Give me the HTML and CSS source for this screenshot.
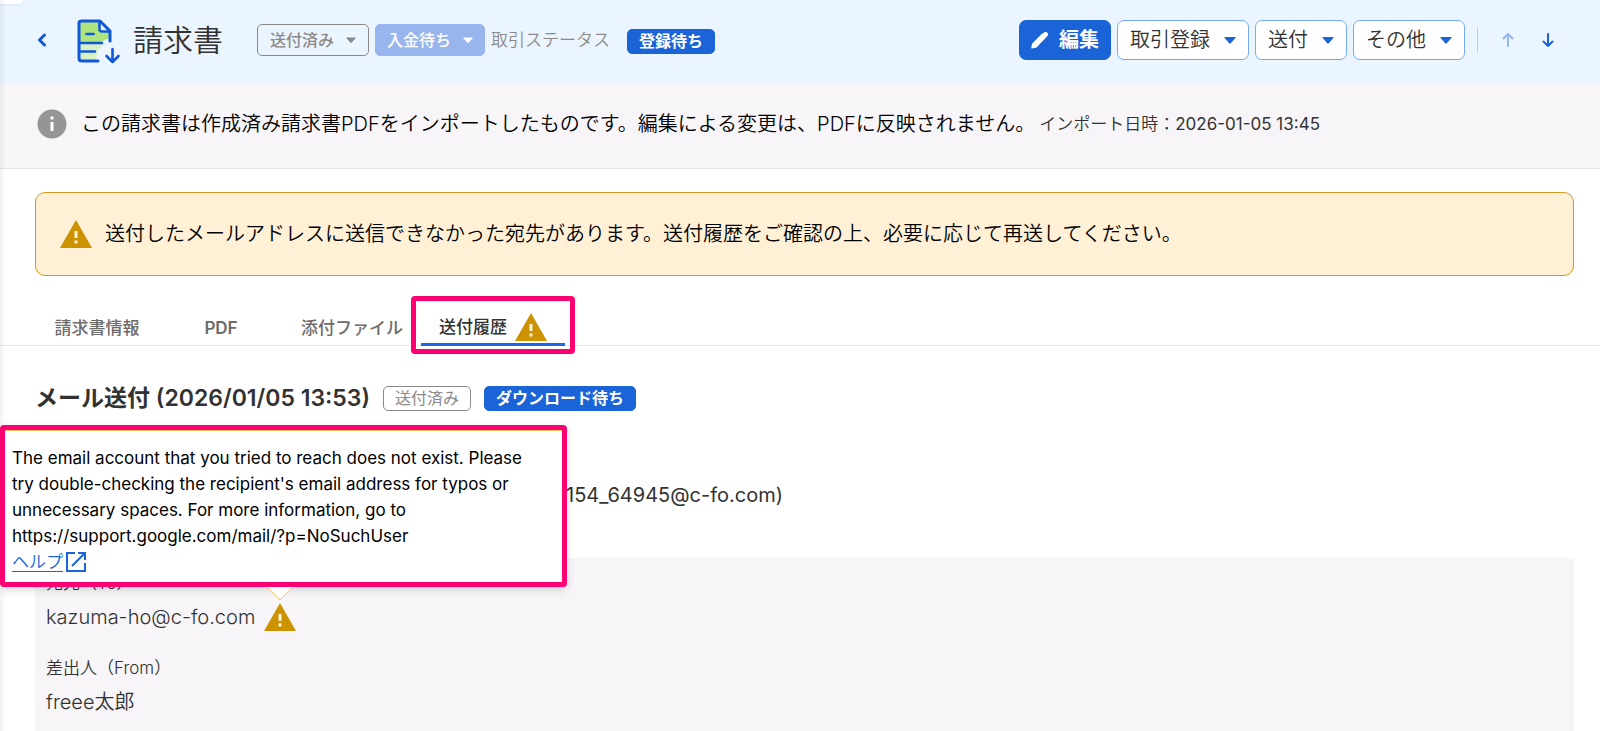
FILE: index.html
```html
<!DOCTYPE html>
<html lang="ja">
<head>
<meta charset="utf-8">
<meta name="viewport" content="width=device-width, initial-scale=1">
<title>請求書</title>
<link rel="stylesheet" href="styles.css">
</head>
<body>
<svg class="defs" aria-hidden="true">
  <symbol id="warn" viewBox="0 0 32 28"><path fill="#cc9200" d="M16 0 32 28H0z"/><path fill="#fff3da" d="M14.500 11h3v7h-3zM14.500 20.500h3v3h-3z"/></symbol>
  <symbol id="caret" viewBox="0 0 12 8"><path fill="currentColor" d="M1 1h10q1 0 .4.9L7 7q-1 1-2 0L.6 1.900Q0 1 1 1z"/></symbol>
  <symbol id="arrow" viewBox="0 0 12 14"><path fill="none" stroke="currentColor" stroke-width="2" stroke-linecap="round" stroke-linejoin="round" d="M6 1v12M1.500 8.500 6 13l4.500-4.500"/></symbol>
</svg>
<div class="corner"></div>
<div class="edge"></div>

<header class="header">
  <a class="back" href="#" aria-label="戻る"><svg width="10" height="14" viewBox="0 0 10 14"><path fill="none" stroke="#1058d8" stroke-width="3" stroke-linecap="round" stroke-linejoin="round" d="M7.500 2 2.500 7l5 5"/></svg></a>
  <svg class="doc" width="44" height="46" viewBox="0 0 44 46" aria-hidden="true">
    <path fill="#aee37e" d="M3 3h20l10 10v7c-6 2-8 4-11 5H3z"/>
    <path fill="#d9f1c4" d="M3 25h26c-6 4-9 8-9 12l-2 5H3z"/>
    <path fill="#ebf5ff" d="M22 2v12h11z"/>
    <g fill="none" stroke="#1058d8" stroke-width="3" stroke-linecap="round" stroke-linejoin="round">
      <path d="M33 23V13L23 3H4.500Q2 3 2 5V40q0 3 3 3h16"/>
      <path stroke-width="2.600" d="M22.500 4v7q0 2.500 2.500 2.500h7M9.500 16h7M3 25h22M3 33.500h15M35.500 31v13M29.500 38l6 6 6-6"/>
    </g>
  </svg>
  <h1 class="title">請求書</h1>
  <div class="status">
    <button class="state state-line">送付済み<svg class="caret"><use href="#caret"/></svg></button>
    <button class="state state-fill">入金待ち<svg class="caret"><use href="#caret"/></svg></button>
    <span class="status-label">取引ステータス</span>
  </div>
  <span class="badge badge-fill badge-deal">登録待ち</span>
  <div class="actions">
    <button class="btn btn-primary"><svg width="18" height="18" viewBox="0 0 18 18" aria-hidden="true"><path fill="#fff" d="M1 13 11 2.500l4 4L5.500 16.500 1 17.500q-1 0-.8-1z"/><path fill="none" stroke="#fff" stroke-width="5" stroke-linecap="round" d="M4 13.500 14.500 3.500"/></svg>編集</button>
    <button class="btn">取引登録<svg class="caret"><use href="#caret"/></svg></button>
    <button class="btn">送付<svg class="caret"><use href="#caret"/></svg></button>
    <button class="btn">その他<svg class="caret"><use href="#caret"/></svg></button>
  </div>
  <div class="pager">
    <button class="step step-up" disabled aria-label="前へ"><svg><use href="#arrow"/></svg></button>
    <button class="step" aria-label="次へ"><svg><use href="#arrow"/></svg></button>
  </div>
</header>

<section class="notice">
  <svg width="30" height="30" viewBox="0 0 30 30" aria-hidden="true"><circle cx="15" cy="15" r="14.500" fill="#969496"/><path fill="#fff" d="M13.500 7.500h3v3h-3zM13.500 13h3v9h-3z"/></svg>
  <p>この請求書は作成済み請求書PDFをインポートしたものです。編集による変更は、PDFに反映されません。</p>
  <small>インポート日時：<time>2026-01-05 13:45</time></small>
</section>

<main class="main">
  <div class="alert" role="alert">
    <svg class="warn"><use href="#warn"/></svg>
    <p>送付したメールアドレスに送信できなかった宛先があります。送付履歴をご確認の上、必要に応じて再送してください。</p>
  </div>

  <nav class="tabs">
    <a class="tab" href="#">請求書情報</a>
    <a class="tab tab-latin" href="#">PDF</a>
    <a class="tab" href="#">添付ファイル</a>
    <a class="tab tab-on" href="#">送付履歴<svg class="warn"><use href="#warn"/></svg></a>
  </nav>

  <div class="record">
    <h2>メール送付 (2026/01/05 13:53)</h2>
    <span class="badge badge-line">送付済み</span>
    <span class="badge badge-fill">ダウンロード待ち</span>
  </div>
  <p class="sender">154_64945@c-fo.com)</p>

  <dl class="detail">
    <dt>宛先（To）</dt>
    <dd>kazuma-ho@c-fo.com<svg class="warn"><use href="#warn"/></svg></dd>
    <dt>差出人（From）</dt>
    <dd>freee太郎</dd>
  </dl>
</main>

<div class="popup" role="tooltip">
  <div class="popup-body">
    <p>The email account that you tried to reach does not exist. Please try double-checking the recipient's email address for typos or unnecessary spaces. For more information, go to https://support.google.com/mail/?p=NoSuchUser</p>
    <a class="help" href="#"><span>ヘルプ</span><svg width="20" height="20" viewBox="0 0 20 20" aria-hidden="true"><path fill="none" stroke="#1b64d8" stroke-width="2" d="M9 1H1v18h18v-8M12 1h7v7M19 1 6 14"/></svg></a>
  </div>
  <svg class="tip" width="26" height="14" viewBox="0 0 26 14" aria-hidden="true"><path fill="#fff" d="M0 0h26L13 13z"/><path fill="none" stroke="#ffc15c" d="M.5 0 13 13 25.500 0"/></svg>
</div>
</body>
</html>
```
FILE: styles.css
```css
* { box-sizing: border-box; }
body {
  margin: 0;
  min-height: 100vh;
  display: flex;
  flex-direction: column;
  position: relative;
  background: #fff;
  color: #323232;
  font: 350 20px/30px Inter, "Noto Sans CJK JP", sans-serif;
}
p, h1, h2, dl, dd { margin: 0; }
button { font: inherit; color: inherit; cursor: pointer; }
svg { flex: none; }
.defs { position: absolute; width: 0; height: 0; }
.caret { width: 12px; height: 8px; }
.warn { width: 32px; height: 28px; }

.corner {
  position: absolute;
  top: 0;
  left: 0;
  width: 23px;
  height: 4px;
  background: #fff;
  border-bottom-right-radius: 4px;
  box-shadow: 0 0 3px #bcd0ee;
}
.edge {
  position: absolute;
  inset: 0 auto 0 0;
  width: 6px;
  background: linear-gradient(90deg, rgba(0, 0, 0, .05), transparent);
}

.header {
  display: flex;
  align-items: center;
  height: 84px;
  padding: 0 46px 4px 37px;
  background: #ebf5ff;
}
.back { display: flex; margin-right: 30px; }
.doc { margin-top: 2px; }
.title { margin-left: 12px; font-size: 30px; font-weight: 350; line-height: 40px; }
.status {
  display: flex;
  align-items: center;
  gap: 6px;
  margin: 0 17px 0 34px;
}
.state {
  display: flex;
  align-items: center;
  gap: 12px;
  height: 32px;
  padding: 0 12px;
  border: 1px solid #8c8989;
  border-radius: 5px;
  background: transparent;
  color: #8c8989;
  font-size: 16px;
  font-weight: 500;
}
.state .caret { width: 10px; }
.state-fill { padding: 0 11px; border-color: #98b5ed; background: #98b5ed; color: #fff; }
.status-label { color: #8c8989; font-size: 17px; }
.badge {
  padding: 0 11px;
  border: 1px solid #8c8989;
  border-radius: 5px;
  font-size: 16px;
  line-height: 23px;
}
.badge-line { color: #8c8989; font-weight: 400; }
.badge-fill { border-color: #1b64d8; background: #1b64d8; color: #fff; font-weight: 700; }
.badge-deal { margin-top: 3px; }
.actions { display: flex; gap: 6px; margin-left: auto; }
.btn {
  display: flex;
  align-items: center;
  gap: 14px;
  height: 40px;
  padding: 0 12px;
  border: 1px solid #73a9f7;
  border-radius: 7px;
  background: #fff;
}
.btn .caret { color: #1b64d8; }
.btn-primary {
  gap: 10px;
  padding: 0 11px;
  border-color: #1b64d8;
  background: #1b64d8;
  color: #fff;
  font-weight: 700;
}
.pager {
  display: flex;
  gap: 28px;
  margin-left: 12px;
  padding-left: 24px;
  border-left: 1px solid #aacfff;
}
.step { padding: 5px 0; border: 0; background: none; color: #1b64d8; display: flex; }
.step svg { width: 12px; height: 14px; }
.step-up { color: #98b5ed; transform: rotate(180deg); }

.notice {
  display: flex;
  align-items: center;
  min-height: 85px;
  padding: 0 26px 4px 37px;
  border-bottom: 1px solid #e9e7e7;
  background: #f7f5f7;
  color: #000;
}
.notice p { margin: 0 4px 0 14px; }
.notice small { color: #323232; font-size: 17px; }
.notice time { font-weight: 400; }

.main { display: flex; flex-direction: column; flex: 1; }
.alert {
  display: flex;
  align-items: center;
  gap: 13px;
  margin: 23px 26px 0 35px;
  padding: 26px 24px;
  border: 1px solid #d09a20;
  border-radius: 10px;
  background: #fff0d6;
  color: #000;
}

.tabs {
  display: flex;
  margin-top: 24px;
  padding-left: 35px;
  border-bottom: 1px solid #e9e7e7;
}
.tab {
  display: flex;
  align-items: center;
  justify-content: center;
  gap: 8px;
  min-width: 124px;
  height: 46px;
  margin-bottom: -1px;
  padding: 9px 18px 0;
  color: #6e6b6b;
  font-size: 17px;
  font-weight: 500;
  text-decoration: none;
}
.tab-latin { font-weight: 600; }
.tab-on {
  position: relative;
  padding-top: 11px;
  border-bottom: 3px solid #1b64f0;
  color: #323232;
}
.tab-on::after {
  content: "";
  position: absolute;
  inset: -4px -10px -11px -10px;
  border: 5px solid #ff0073;
  border-radius: 4px;
}

.record {
  display: flex;
  align-items: center;
  gap: 13px;
  margin: 36px 26px 0 35px;
}
.record h2 { font-size: 23px; font-weight: 600; line-height: 32px; }
.sender { margin-top: 66px; padding-left: 566px; font-weight: 400; }
.detail {
  flex: 1;
  margin: 48px 26px 0 35px;
  padding: 12px 11px 14px;
  background: #f7f5f7;
}
.detail dt { font-size: 17px; line-height: 26px; }
.detail dd { display: flex; align-items: center; gap: 9px; margin: 6px 0 23px; }
.detail dd:last-child { margin-bottom: 0; }

.popup { position: absolute; top: 425px; left: 0; width: 567px; }
.popup-body {
  padding: 15px 24px 7px 7px;
  border: 5px solid #ff0073;
  border-radius: 4px;
  background: #fff;
  box-shadow: inset 0 1px #ffc15c, 0 3px 8px rgba(0, 0, 0, .15);
  color: #000;
  font-size: 17px;
  line-height: 26px;
  font-weight: 400;
}
.help { display: flex; align-items: center; gap: 3px; color: #1b64d8; text-decoration: none; font-weight: 350; }
.help span { text-decoration: underline; text-underline-offset: 3px; }
.tip { position: absolute; top: 100%; left: 267px; }
```
